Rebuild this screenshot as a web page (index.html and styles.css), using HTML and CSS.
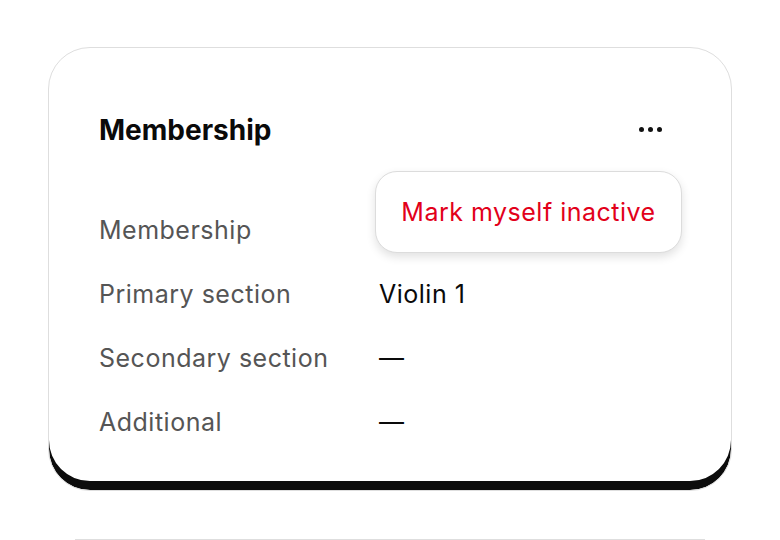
FILE: index.html
```html
<!DOCTYPE html>
<html>
<head>
<meta charset="utf-8">
<link rel="stylesheet" href="styles.css">
</head>
<body>
<div class="page">
  <section class="card">
    <header class="card-head">
      <h2 class="card-title">Membership</h2>
      <button class="more" aria-label="More"><span></span><span></span><span></span></button>
    </header>
    <dl class="rows">
      <div class="row"><dt>Membership</dt><dd></dd></div>
      <div class="row"><dt>Primary section</dt><dd>Violin 1</dd></div>
      <div class="row"><dt>Secondary section</dt><dd>—</dd></div>
      <div class="row"><dt>Additional</dt><dd>—</dd></div>
    </dl>
    <div class="menu">
      <button class="menu-item">Mark myself inactive</button>
    </div>
  </section>
  <div class="divider"></div>
</div>
</body>
</html>
```

FILE: styles.css
```css
* { box-sizing: border-box; }
html, body { margin: 0; padding: 0; background: #fff; }
body { font-family: Inter, "Noto Sans", sans-serif; color: #111; }
.page { padding: 47px 48px 0 48px; width: 780px; }
.card {
  position: relative;
  width: 684px;
  height: 444px;
  border: 1.5px solid #dedede;
  border-radius: 42px;
  box-shadow: inset 0 -9px 0 #0c0c0c;
  padding: 65px 50px 0 50px;
  background: #fff;
}
.card-head { display: flex; justify-content: space-between; align-items: center; height: 34px; }
.card-title { margin: 0; font-size: 28px; font-weight: 700; letter-spacing: 0; color: #0a0a0a; }
.more { display: flex; gap: 4px; background: none; border: 0; padding: 0; margin-right: 19px; margin-top: -2px; cursor: pointer; }
.more span { width: 5px; height: 5px; border-radius: 50%; background: #111; display: block; }
.rows { margin: 51px 0 0 0; }
.row { display: grid; grid-template-columns: 280px 1fr; height: 64px; align-items: center; }
.row dt { color: #555; font-size: 25px; letter-spacing: 0.5px; }
.row dd { margin: 0; font-size: 25px; color: #0a0a0a; letter-spacing: 0.5px; }
.menu {
  position: absolute;
  left: 326px;
  top: 123px;
  width: 307px;
  height: 82px;
  border: 1.5px solid #dcdcdc;
  border-radius: 22px;
  background: #fff;
  box-shadow: 0 4px 10px rgba(0,0,0,0.12);
  display: flex; align-items: center; justify-content: center;
}
.menu-item { background: none; border: 0; font-family: inherit; font-size: 25px; letter-spacing: 0.5px; color: #e2001a; padding: 0; cursor: pointer; }
.divider { margin: 48px 27px 0 27px; height: 1.5px; background: #dedede; }
```
